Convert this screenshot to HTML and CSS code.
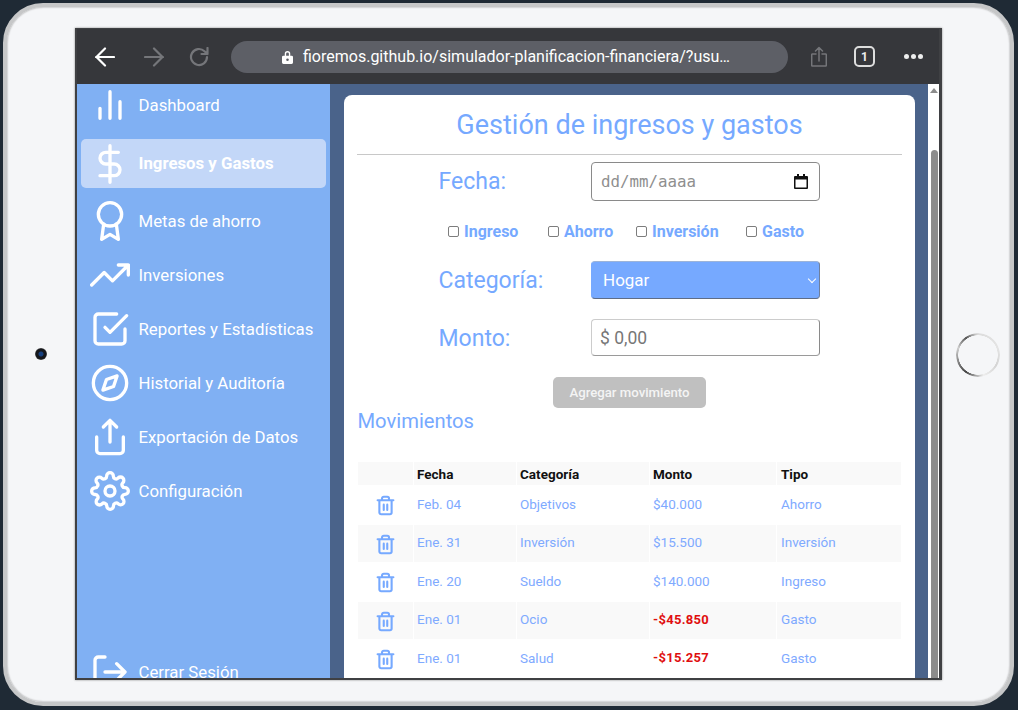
FILE: index.html
```html
<!DOCTYPE html>
<html>
<head>
  <title>Gestión de ingresos y gastos</title>
  <link rel="stylesheet" href="styles.css">
</head>
<body>
  <div class="tablet">
    <div class="camera"></div>
    <div class="home-ring"></div>

    <div class="screen">
      <div class="browser-bar">
        <svg class="bar-icon back" viewBox="0 0 20 20"><path d="M1 10h18M10 1.500 1.500 10l8.500 8.500"/></svg>
        <svg class="bar-icon forward" viewBox="0 0 20 20"><path d="M1 10h18M10 1.500 18.500 10 10 18.500"/></svg>
        <svg class="bar-icon reload" viewBox="0 0 20 20"><path d="M18 10a8 8 0 1 1-2.500-5.800L18.500 7M18.500 1v6h-6"/></svg>
        <div class="address">
          <svg class="lock" viewBox="0 0 12 15"><path d="M3 6V4a3 3 0 0 1 6 0v2h1.500A1.500 1.500 0 0 1 12 7.500v6a1.500 1.500 0 0 1-1.500 1.500h-9A1.500 1.500 0 0 1 0 13.500v-6A1.500 1.500 0 0 1 1.500 6zm1.500 0h3V4a1.500 1.500 0 0 0-3 0z"/><circle cx="6" cy="10.500" r="1.400" fill="#5d5f66"/></svg>
          <span>fioremos.github.io/simulador-planificacion-financiera/?usu…</span>
        </div>
        <svg class="bar-icon share" viewBox="0 0 16 21"><path d="M5 8H1.500a.8.800 0 0 0-.8.800v10.500a.8.800 0 0 0 .8.800h13a.8.800 0 0 0 .8-.8V8.800a.8.800 0 0 0-.8-.8H11M8 15V1.500M4.500 5 8 1.500 11.500 5"/></svg>
        <div class="tab-count">1</div>
        <div class="dots"><i></i><i></i><i></i></div>
      </div>

      <div class="app">
        <nav class="sidebar">
          <a class="nav-item first">
            <svg viewBox="0 0 24 24"><path d="M18 20V10M12 20V4M6 20v-6"/></svg>
            Dashboard
          </a>
          <a class="nav-item active">
            <svg viewBox="0 0 24 24"><path d="M12 1v22M17 5H9.500a3.500 3.500 0 0 0 0 7h5a3.500 3.500 0 0 1 0 7H6"/></svg>
            <span class="active-text">Ingresos y Gastos</span>
          </a>
          <a class="nav-item after-active">
            <svg viewBox="0 0 24 24"><circle cx="12" cy="8" r="7"/><path d="M8.210 13.890 7 23l5-3 5 3-1.210-9.120"/></svg>
            Metas de ahorro
          </a>
          <a class="nav-item">
            <svg viewBox="0 0 24 24"><path d="M23 6l-9.500 9.500-5-5L1 18M17 6h6v6"/></svg>
            Inversiones
          </a>
          <a class="nav-item">
            <svg viewBox="0 0 24 24"><path d="M9 11l3 3L22 4M21 12v7a2 2 0 0 1-2 2H5a2 2 0 0 1-2-2V5a2 2 0 0 1 2-2h11"/></svg>
            Reportes y Estadísticas
          </a>
          <a class="nav-item">
            <svg viewBox="0 0 24 24"><circle cx="12" cy="12" r="10"/><path d="M16.240 7.760l-2.120 6.360-6.360 2.120 2.120-6.360z"/></svg>
            Historial y Auditoría
          </a>
          <a class="nav-item">
            <svg viewBox="0 0 24 24"><path d="M4 12v8a2 2 0 0 0 2 2h12a2 2 0 0 0 2-2v-8M16 6l-4-4-4 4M12 2v13"/></svg>
            Exportación de Datos
          </a>
          <a class="nav-item">
            <svg viewBox="0 0 24 24"><circle cx="12" cy="12" r="3"/><path d="M19.400 15a1.650 1.650 0 0 0 .33 1.820l.06.06a2 2 0 0 1 0 2.830 2 2 0 0 1-2.830 0l-.06-.06a1.650 1.650 0 0 0-1.820-.33 1.650 1.650 0 0 0-1 1.510V21a2 2 0 0 1-2 2 2 2 0 0 1-2-2v-.09A1.650 1.650 0 0 0 9 19.400a1.650 1.650 0 0 0-1.820.33l-.06.06a2 2 0 0 1-2.830 0 2 2 0 0 1 0-2.830l.06-.06a1.650 1.650 0 0 0 .33-1.820 1.650 1.650 0 0 0-1.510-1H3a2 2 0 0 1-2-2 2 2 0 0 1 2-2h.09A1.650 1.650 0 0 0 4.600 9a1.650 1.650 0 0 0-.33-1.820l-.06-.06a2 2 0 0 1 0-2.830 2 2 0 0 1 2.830 0l.06.06a1.650 1.650 0 0 0 1.820.33H9a1.650 1.650 0 0 0 1-1.510V3a2 2 0 0 1 2-2 2 2 0 0 1 2 2v.09a1.650 1.650 0 0 0 1 1.510 1.650 1.650 0 0 0 1.820-.33l.06-.06a2 2 0 0 1 2.830 0 2 2 0 0 1 0 2.830l-.06.06a1.650 1.650 0 0 0-.33 1.820V9a1.650 1.650 0 0 0 1.510 1H21a2 2 0 0 1 2 2 2 2 0 0 1-2 2h-.09a1.650 1.650 0 0 0-1.510 1z"/></svg>
            Configuración
          </a>
          <a class="nav-item logout">
            <svg viewBox="0 0 24 24"><path d="M9 21H5a2 2 0 0 1-2-2V5a2 2 0 0 1 2-2h4M16 17l5-5-5-5M21 12H9"/></svg>
            Cerrar Sesión
          </a>
        </nav>

        <main class="main">
          <section class="card">
            <h1 class="title">Gestión de ingresos y gastos</h1>
            <div class="divider"></div>

            <div class="field first-field">
              <label class="field-label">Fecha:</label>
              <div class="date-box">
                <span>dd/mm/aaaa</span>
                <svg viewBox="0 0 14 15"><path d="M3 0h2v2h4V0h2v2h2a1 1 0 0 1 1 1v11a1 1 0 0 1-1 1H1a1 1 0 0 1-1-1V3a1 1 0 0 1 1-1h2zM1.500 5.500V13.500h11V5.500z"/></svg>
              </div>
            </div>

            <div class="checks">
              <label class="check"><input type="checkbox">Ingreso</label>
              <label class="check"><input type="checkbox">Ahorro</label>
              <label class="check"><input type="checkbox">Inversión</label>
              <label class="check"><input type="checkbox">Gasto</label>
            </div>

            <div class="field">
              <label class="field-label">Categoría:</label>
              <div class="select-wrap">
                <select class="select-box">
                  <option>Hogar</option>
                </select>
              </div>
            </div>

            <div class="field amount-field">
              <label class="field-label">Monto:</label>
              <input class="amount-box" type="text" value="$ 0,00">
            </div>

            <button class="add-btn" type="button">Agregar movimiento</button>

            <h2 class="subtitle">Movimientos</h2>

            <table class="moves">
              <colgroup>
                <col class="c-del"><col class="c-date"><col class="c-cat"><col class="c-amount"><col class="c-type">
              </colgroup>
              <thead>
                <tr><th></th><th>Fecha</th><th>Categoría</th><th>Monto</th><th class="last">Tipo</th></tr>
              </thead>
              <tbody>
                <tr>
                  <td class="del"><svg viewBox="0 0 24 24"><path d="M3 6h18M19 6v14a2 2 0 0 1-2 2H7a2 2 0 0 1-2-2V6m3 0V4a2 2 0 0 1 2-2h4a2 2 0 0 1 2 2v2M10 11v6M14 11v6"/></svg></td>
                  <td>Feb. 04</td><td>Objetivos</td><td>$40.000</td><td class="last">Ahorro</td>
                </tr>
                <tr>
                  <td class="del"><svg viewBox="0 0 24 24"><path d="M3 6h18M19 6v14a2 2 0 0 1-2 2H7a2 2 0 0 1-2-2V6m3 0V4a2 2 0 0 1 2-2h4a2 2 0 0 1 2 2v2M10 11v6M14 11v6"/></svg></td>
                  <td>Ene. 31</td><td>Inversión</td><td>$15.500</td><td class="last">Inversión</td>
                </tr>
                <tr>
                  <td class="del"><svg viewBox="0 0 24 24"><path d="M3 6h18M19 6v14a2 2 0 0 1-2 2H7a2 2 0 0 1-2-2V6m3 0V4a2 2 0 0 1 2-2h4a2 2 0 0 1 2 2v2M10 11v6M14 11v6"/></svg></td>
                  <td>Ene. 20</td><td>Sueldo</td><td>$140.000</td><td class="last">Ingreso</td>
                </tr>
                <tr>
                  <td class="del"><svg viewBox="0 0 24 24"><path d="M3 6h18M19 6v14a2 2 0 0 1-2 2H7a2 2 0 0 1-2-2V6m3 0V4a2 2 0 0 1 2-2h4a2 2 0 0 1 2 2v2M10 11v6M14 11v6"/></svg></td>
                  <td>Ene. 01</td><td>Ocio</td><td class="negative">-$45.850</td><td class="last">Gasto</td>
                </tr>
                <tr>
                  <td class="del"><svg viewBox="0 0 24 24"><path d="M3 6h18M19 6v14a2 2 0 0 1-2 2H7a2 2 0 0 1-2-2V6m3 0V4a2 2 0 0 1 2-2h4a2 2 0 0 1 2 2v2M10 11v6M14 11v6"/></svg></td>
                  <td>Ene. 01</td><td>Salud</td><td class="negative">-$15.257</td><td class="last">Gasto</td>
                </tr>
              </tbody>
            </table>
          </section>
        </main>

        <div class="scrollbar">
          <div class="scroll-arrow"></div>
          <div class="scroll-thumb"></div>
        </div>
      </div>
    </div>
  </div>
</body>
</html>
```

FILE: styles.css
```css
* {
  box-sizing: border-box;
}

html,
body {
  height: 100%;
}

body {
  margin: 0;
  background-color: #1f2a35;
  font-family: Roboto, Arial, sans-serif;
  overflow: hidden;
}

/* device frame */
.tablet {
  position: relative;
  width: 1011px;
  height: 703px;
  margin: 3px;
  padding: 21px 0 0 68px;
  background-color: #f5f6f8;
  border: 4px solid #c6c7c8;
  border-radius: 40px;
  box-shadow: inset 0 0 2px #8a8a8a;
}

.camera {
  position: absolute;
  left: 28px;
  top: 341px;
  width: 12px;
  height: 12px;
  border-radius: 50%;
  background: radial-gradient(circle, #16407f 0 2px, #15171c 3px, #15171c 5px, #555 6px);
}

.home-ring {
  position: absolute;
  left: 949px;
  top: 326px;
  width: 44px;
  height: 44px;
  border-radius: 50%;
  background: conic-gradient(#dcdcdc 0deg, #e4e4e4 70deg, #d4d4d4 120deg, #eeeeee 165deg, #444 215deg, #8c8c8c 255deg, #cfcfcf 290deg, #555 325deg, #aaa 345deg, #dcdcdc 360deg);
  -webkit-mask: radial-gradient(circle, transparent 19.500px, #000 20px);
  mask: radial-gradient(circle, transparent 19.500px, #000 20px);
}

.screen {
  display: flex;
  flex-direction: column;
  width: 867px;
  height: 652px;
  border-style: solid;
  border-color: #3f4043;
  border-width: 1px 3px 2px 2px;
  box-shadow: 0 0 2px #8a8a8a;
  overflow: hidden;
}

/* browser toolbar */
.browser-bar {
  display: flex;
  align-items: center;
  flex: none;
  height: 55px;
  padding-left: 18px;
  background-color: #36373b;
}

.bar-icon {
  flex: none;
  width: 20px;
  height: 20px;
  fill: none;
  stroke: #75767a;
  stroke-width: 2.200;
  stroke-linecap: round;
  stroke-linejoin: round;
}

.back {
  stroke: #fff;
}

.forward {
  margin-left: 29px;
}

.reload {
  margin-left: 25px;
}

.address {
  display: flex;
  align-items: center;
  flex: none;
  width: 557px;
  height: 32px;
  margin-left: 22px;
  padding-left: 51px;
  border-radius: 16px;
  background-color: #5d5f66;
  color: #fff;
  font-size: 16px;
}

.lock {
  width: 11px;
  height: 14px;
  margin-right: 10px;
  fill: #fff;
}

.share {
  width: 16px;
  height: 21px;
  margin-left: 23px;
  stroke-width: 1.500;
}

.tab-count {
  display: flex;
  align-items: center;
  justify-content: center;
  flex: none;
  width: 21px;
  height: 21px;
  margin-left: 27px;
  border: 2px solid #ddd;
  border-radius: 5px;
  color: #eee;
  font-size: 12px;
  font-weight: 700;
}

.dots {
  display: flex;
  gap: 2px;
  margin-left: 29px;
}

.dots i {
  width: 5px;
  height: 5px;
  border-radius: 50%;
  background-color: #eee;
}

/* app layout */
.app {
  display: flex;
  flex: 1;
  min-height: 0;
}

.sidebar {
  display: flex;
  flex-direction: column;
  flex: none;
  width: 253px;
  background-color: #80b0f3;
  overflow: hidden;
}

.nav-item {
  display: flex;
  align-items: center;
  flex: none;
  gap: 8.500px;
  height: 54px;
  margin: 0 4px;
  padding-left: 9px;
  border-radius: 5px;
  color: #fff;
  font-size: 16.800px;
}

.nav-item svg {
  flex: none;
  width: 40px;
  height: 40px;
  fill: none;
  stroke: #fff;
  stroke-width: 2;
  stroke-linecap: round;
  stroke-linejoin: round;
}

.nav-item.first {
  margin-top: -6px;
}

.nav-item.active {
  height: 49px;
  margin-top: 7px;
  background-color: #c3d7f8;
  font-weight: 700;
}

.active-text {
  padding-bottom: 2px;
}

.nav-item.after-active {
  margin-top: 6px;
}

.nav-item.logout {
  margin-top: 127px;
}

.main {
  flex: 1;
  min-width: 0;
  padding: 11px 13px 0 14px;
  background-color: #4a638a;
  overflow: hidden;
}

.card {
  height: 640px;
  padding: 14px 13px 0;
  background-color: #fff;
  border-radius: 8px;
  color: #76a9ff;
}

.title {
  margin: 0;
  font-size: 27px;
  font-weight: 400;
  line-height: 32px;
  text-align: center;
}

.divider {
  height: 1px;
  margin-top: 13px;
  background-color: #c8c8c8;
}

/* form */
.field {
  display: flex;
  align-items: center;
  margin-top: 20px;
  padding-left: 81.500px;
}

.first-field {
  margin-top: 7px;
}

.field-label {
  flex: none;
  width: 152.500px;
  font-size: 23px;
}

.amount-field .field-label {
  padding-top: 2px;
}

.date-box,
.select-box,
.amount-box {
  width: 229px;
  border-radius: 4px;
  font-family: inherit;
  font-size: 17px;
}

.date-box {
  display: flex;
  align-items: center;
  justify-content: space-between;
  flex: none;
  height: 39px;
  padding: 0 11px 0 9px;
  border: 1px solid #8a8a8a;
  color: #8f8f8f;
  font-family: "DejaVu Sans Mono", monospace;
  font-size: 15.800px;
}

.date-box svg {
  width: 14px;
  height: 15px;
  fill: #111;
}

.checks {
  display: grid;
  grid-template-columns: 100px 88px 110px auto;
  height: 20px;
  margin-top: 20px;
  padding-left: 91px;
}

.check {
  display: flex;
  align-items: center;
  gap: 5px;
  font-size: 16px;
  font-weight: 700;
}

.check input {
  width: 11px;
  height: 11px;
  margin: 0;
  appearance: none;
  background-color: #fff;
  border: 1px solid #7d7d7d;
  border-radius: 2px;
}

.select-wrap {
  position: relative;
  flex: none;
  width: 229px;
  height: 38px;
}

/* chevron of the select */
.select-wrap::after {
  content: "";
  position: absolute;
  top: 15px;
  right: 5px;
  width: 5px;
  height: 5px;
  border-right: 1.500px solid #fff;
  border-bottom: 1.500px solid #fff;
  transform: rotate(45deg);
}

.select-box {
  height: 38px;
  padding: 0 11px;
  appearance: none;
  background-color: #76a9ff;
  border: 1px solid #76a9ff;
  border-top-color: #9db4d8;
  border-bottom-color: #5f6d86;
  border-right-color: #6f7f9c;
  color: #fff;
}

.amount-box {
  flex: none;
  height: 37px;
  padding: 0 7px 0 8px;
  background-color: #fff;
  border: 1px solid #ccc;
  border-right-color: #8a8a8a;
  border-bottom-color: #9a9a9a;
  color: #777;
  font-size: 17.500px;
  outline: none;
}

.add-btn {
  display: block;
  width: 153px;
  height: 31px;
  margin: 21px auto 0;
  padding: 0;
  background-color: #c0c0c0;
  border: none;
  border-radius: 5px;
  color: #f4f4f4;
  font-family: inherit;
  font-size: 13.200px;
  font-weight: 500;
}

.subtitle {
  margin: 1px 0 0 0.500px;
  font-size: 20.200px;
  font-weight: 400;
  line-height: 24px;
}

/* movements table */
.moves {
  width: 545px;
  margin-top: 28px;
  border-collapse: separate;
  border-spacing: 1px;
  font-size: 13.500px;
  table-layout: fixed;
}

.c-del {
  width: 55px;
}

.c-date {
  width: 102px;
}

.c-cat {
  width: 132px;
}

.c-amount {
  width: 126px;
}

.moves th {
  height: 23px;
  padding: 0 3px;
  background-color: #f9f9f9;
  color: #111;
  font-size: 13.500px;
  font-weight: 700;
  text-align: left;
}

.moves td {
  height: 37.500px;
  padding: 0 3px 2px;
  color: #7faaff;
}

.moves .last {
  padding-left: 4px;
}

.moves tbody tr:nth-child(even) td {
  background-color: #f9f9f9;
}

.moves td.negative {
  color: #e00f0f;
  font-size: 13px;
  font-weight: 700;
  letter-spacing: 0.300px;
}

.moves td.del {
  padding: 2px 0 0;
  text-align: center;
}

.del svg {
  display: block;
  width: 21px;
  height: 21px;
  margin: 0 auto;
  fill: none;
  stroke: #76a9ff;
  stroke-width: 2.400;
  stroke-linecap: round;
  stroke-linejoin: round;
}

/* page scrollbar */
.scrollbar {
  flex: none;
  width: 11px;
  background-color: #fff;
}

.scroll-arrow {
  width: 0;
  height: 0;
  margin: 4px 0 0 2px;
  border-left: 4px solid transparent;
  border-right: 4px solid transparent;
  border-bottom: 5px solid #8c8c8c;
}

.scroll-thumb {
  width: 7px;
  height: 560px;
  margin: 57px 0 0 3px;
  background-color: #8c8c8c;
  border-radius: 4px 4px 0 0;
}
```
